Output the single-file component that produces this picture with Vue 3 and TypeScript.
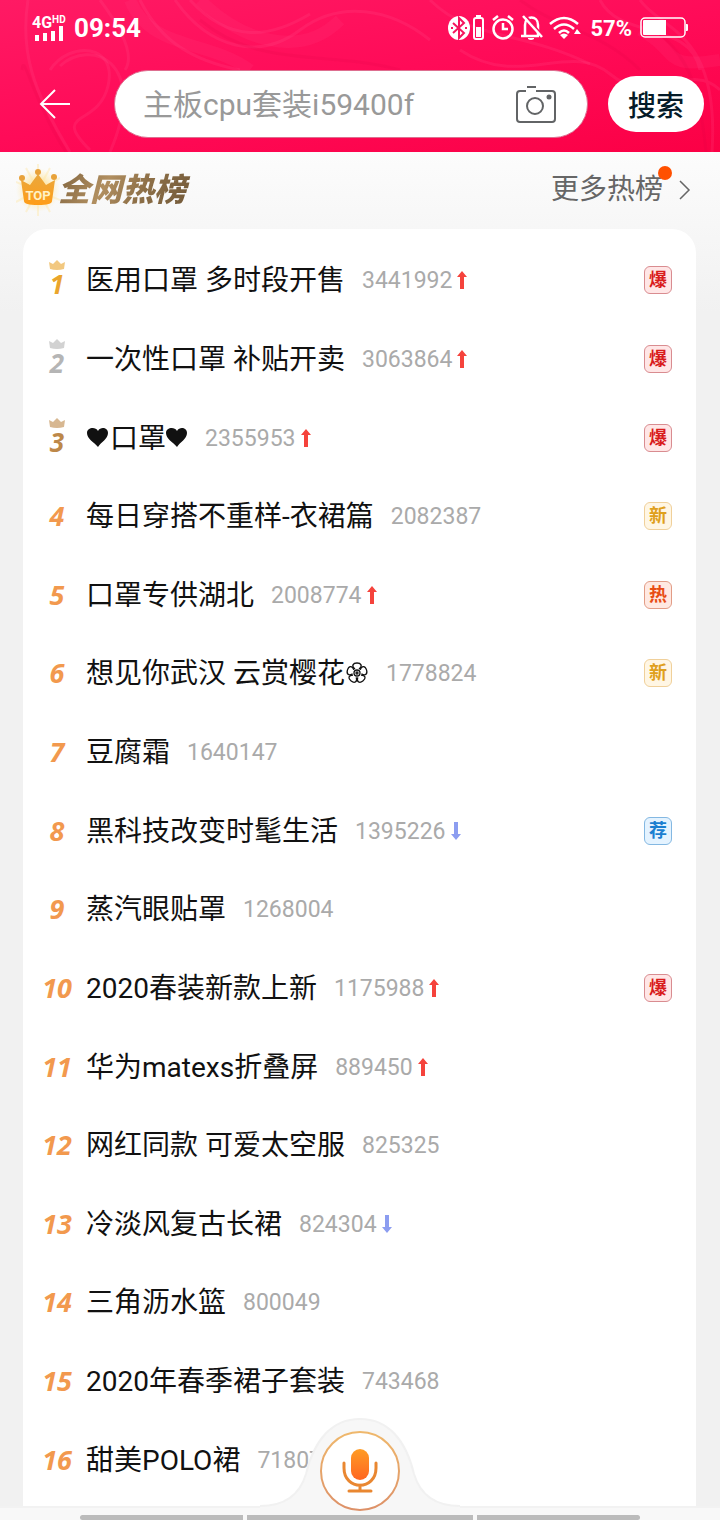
<script setup lang="ts">
import { ref } from 'vue'

type Trend = 'up' | 'down'
type Tag = '爆' | '新' | '热' | '荐'

interface HotItem {
  title: string
  heat: number
  hearts?: boolean
  flower?: boolean
  trend?: Trend
  tag?: Tag
}

const keyword = ref('')

const items: HotItem[] = [
  { title: '医用口罩 多时段开售', heat: 3441992, trend: 'up', tag: '爆' },
  { title: '一次性口罩 补贴开卖', heat: 3063864, trend: 'up', tag: '爆' },
  { title: '口罩', hearts: true, heat: 2355953, trend: 'up', tag: '爆' },
  { title: '每日穿搭不重样-衣裙篇', heat: 2082387, tag: '新' },
  { title: '口罩专供湖北', heat: 2008774, trend: 'up', tag: '热' },
  { title: '想见你武汉 云赏樱花', flower: true, heat: 1778824, tag: '新' },
  { title: '豆腐霜', heat: 1640147 },
  { title: '黑科技改变时髦生活', heat: 1395226, trend: 'down', tag: '荐' },
  { title: '蒸汽眼贴罩', heat: 1268004 },
  { title: '2020春装新款上新', heat: 1175988, trend: 'up', tag: '爆' },
  { title: '华为matexs折叠屏', heat: 889450, trend: 'up' },
  { title: '网红同款 可爱太空服', heat: 825325 },
  { title: '冷淡风复古长裙', heat: 824304, trend: 'down' },
  { title: '三角沥水篮', heat: 800049 },
  { title: '2020年春季裙子套装', heat: 743468 },
  { title: '甜美POLO裙', heat: 718077 },
]

const tagClass: Record<Tag, string> = { 爆: 'boom', 新: 'new', 热: 'hot', 荐: 'pick' }
const heartPath = 'M12 20C8 15 1 12 1 6C1 1 9-1 12 4C15-1 22 1 22 6C22 12 15 15 12 20z'
const petals = [0, 72, 144, 216, 288]
</script>

<template>
  <div class="page">
    <header class="top">
      <svg class="swirl" viewBox="0 0 720 152" preserveAspectRatio="none" aria-hidden="true">
        <g fill="none" stroke="#ff5c93" stroke-opacity=".16" stroke-width="3">
          <path d="M28 0C20 50 32 90 70 152M50 70C70 40 118 44 108 86S50 110 90 150" />
          <path d="M60 66C90 38 150 60 110 152M100 0C130 40 132 60 125 70M140 0C160 40 190 60 240 70" />
          <path d="M175 0C210 50 260 60 300 30S390 8 430 40M190 0C230 44 270 38 310 14M430 0C470 40 520 30 590 64" />
          <path d="M460 50C520 90 570 40 610 74S690 60 720 90M600 0C620 40 690 20 700 70M640 0C660 30 720 30 712 152" />
        </g>
        <g fill="none" stroke="#ff4a85" stroke-opacity=".14" stroke-width="12">
          <path d="M130 0C150 50 210 40 250 70M200 0C240 40 300 60 340 20M640 30C680 50 660 70 720 60" />
        </g>
        <g fill="none" stroke="#d8003f" stroke-opacity=".12" stroke-width="3">
          <path d="M22 70C24 50 32 100 66 152M200 20C260 70 330 50 400 70" />
          <path d="M520 0C560 30 600 30 640 70M660 34C690 60 700 90 706 152" />
        </g>
      </svg>

      <div class="status">
        <div class="status-left">
          <div class="signal">
            <span class="network">4G<sup>HD</sup></span>
            <svg width="36" height="16" viewBox="0 0 36 16" aria-hidden="true">
              <path fill="#fff" d="M3 10h4v6H3zM11 8h4v8h-4zM19 6h4v10h-4zM27 1h4v15h-4z" />
            </svg>
          </div>
          <span class="time">09:54</span>
        </div>
        <div class="status-right">
          <svg width="135" height="28" viewBox="0 0 135 28" aria-hidden="true">
            <ellipse cx="12" cy="14" rx="11" ry="12" fill="#fff" />
            <path d="M6 9l11 10-5 5V4l5 5L6 19" fill="none" stroke="#f5155e" stroke-width="2" />
            <path d="M4 14h2M18 14h2" stroke="#f5155e" stroke-width="2" />
            <g fill="none" stroke="#fff" stroke-width="2">
              <rect x="27" y="4" width="9" height="21" rx="2" />
              <path d="M29 2h5" />
              <circle cx="56" cy="15" r="9.500" stroke-width="2.500" />
              <path d="M56 9v6h5M46 6l5-4M61 2l5 4" stroke-width="2.500" />
              <path d="M78 21V11C78 1 91 1 91 11v10M74 22h18" stroke-width="2.500" />
            </g>
            <path d="M78 1l18 21" stroke="#fb1360" stroke-width="2" />
            <path d="M76 2l19 21" stroke="#fff" stroke-width="2.500" />
            <path fill="#fff" d="M29 13h5v10h-5zM81 24h6v1q-3 2-6 0z" />
            <g fill="none" stroke="#fff" stroke-width="2.500">
              <path d="M103 10Q117-2 131 10M107 15q10-9 20 0M112 19q5-5 10 0" />
            </g>
            <path fill="#fff" d="M113 21q4-3 8 0l-4 4zM130 15l4 5h-7z" />
          </svg>
          <span class="percent">57%</span>
          <svg width="48" height="22" viewBox="0 0 48 22" aria-hidden="true">
            <rect x="1" y="1" width="44" height="19" rx="4" fill="none" stroke="#fff" stroke-width="1.500" />
            <path fill="#fff" d="M4 3h22v15H4q-1 0-1-1V4q0-1 1-1zM46 7h1q1 0 1 1v5q0 1-1 1h-1z" />
          </svg>
        </div>
      </div>

      <form class="search" @submit.prevent>
        <button class="back" type="button" aria-label="返回">
          <svg width="32" height="30" viewBox="0 0 32 30" fill="none" stroke="#fff" stroke-width="2">
            <path d="M32 15H3M17 1L3 15l14 14" />
          </svg>
        </button>
        <div class="field">
          <input v-model="keyword" type="text" aria-label="搜索商品" placeholder="主板cpu套装i59400f" />
          <button class="camera" type="button" aria-label="拍照搜索">
            <svg width="40" height="38" viewBox="0 0 40 38" fill="none" stroke="#626466" stroke-width="2">
              <path d="M10 6H4Q1 6 1 9v25q0 3 3 3h32q3 0 3-3V9q0-3-3-3H20M11 2h9" />
              <circle cx="19" cy="21" r="8" />
              <circle cx="33" cy="12" r="2.500" fill="#626466" stroke="none" />
            </svg>
          </button>
        </div>
        <button class="go" type="submit">搜索</button>
      </form>
    </header>

    <main class="body">
      <div class="heading">
        <h1 class="brand">
          <svg width="44" height="52" viewBox="0 0 44 52" aria-hidden="true">
            <defs>
              <radialGradient id="glow">
                <stop offset=".5" stop-color="#ffe08a" stop-opacity=".6" />
                <stop offset="1" stop-color="#ffe9a8" stop-opacity="0" />
              </radialGradient>
              <linearGradient id="gold" x2="0" y2="1">
                <stop stop-color="#e9a83e" />
                <stop offset="1" stop-color="#ff9d18" />
              </linearGradient>
            </defs>
            <circle cx="22" cy="26" r="22" fill="url(#glow)" />
            <path d="M22 0v52M0 18l44 18M0 38l44-24M10 4l24 44M34 4L10 48" stroke="#ffe7a0" stroke-opacity=".4" stroke-width="2" />
            <path d="M5 16l9 5 8-11 8 11 9-5-3 21q0 4-14 4T8 37z" fill="url(#gold)" />
            <g fill="#e8a23a">
              <circle cx="6" cy="14" r="3" />
              <circle cx="22" cy="8" r="3" />
              <circle cx="38" cy="13" r="3" />
            </g>
            <text x="22" y="36" text-anchor="middle" class="crown-text">TOP</text>
          </svg>
          <span class="brand-text">全网热榜</span>
        </h1>
        <a class="more" href="#">
          <span class="more-text">更多热榜<i class="dot"></i></span>
          <svg width="12" height="20" viewBox="0 0 12 20" fill="none" stroke="#666" stroke-width="1.500">
            <path d="M1 1l9 9-9 9" />
          </svg>
        </a>
      </div>

      <ol class="list">
        <li v-for="(item, i) in items" :key="item.title" class="row">
          <span class="rank" :class="i < 3 ? ['medal', `medal-${i + 1}`] : ''">
            <svg v-if="i < 3" class="crown" width="18" height="10" viewBox="0 0 18 10" aria-hidden="true">
              <path d="M1 2l4 2 4-4 4 4 4-2-1 7q-7 2-14 0z" />
            </svg>
            <span class="digit">{{ i + 1 }}</span>
          </span>
          <a class="title" href="#">
            <svg v-if="item.hearts" width="24" height="22" viewBox="0 0 24 22" role="img" aria-label="爱心">
              <path :d="heartPath" fill="currentColor" />
            </svg>
            <span>{{ item.title }}</span>
            <svg v-if="item.hearts" width="22" height="22" viewBox="1 0 22 22" role="img" aria-label="爱心">
              <path :d="heartPath" fill="currentColor" />
            </svg>
            <svg v-if="item.flower" width="24" height="22" viewBox="-12 -11 24 22" fill="none" stroke="currentColor" stroke-width="1.300" role="img" aria-label="花">
              <path v-for="angle in petals" :key="angle" :transform="`rotate(${angle})`" d="M-2-4C-6-7-4-10 0-10S6-7 2-4" />
              <circle r="3" />
              <circle r="1" />
            </svg>
          </a>
          <span class="heat">{{ item.heat }}</span>
          <svg v-if="item.trend" class="trend" :class="item.trend" width="10" height="20" viewBox="0 0 10 20" role="img" :aria-label="item.trend">
            <path d="M5 1l5 6H7v12H3V7H0z" />
          </svg>
          <span v-if="item.tag" class="tag" :class="tagClass[item.tag]">{{ item.tag }}</span>
        </li>
      </ol>
    </main>

    <footer class="dock">
      <div class="nav"><i class="bar"></i><i class="bar wide"></i><i class="bar"></i></div>
      <div class="voice-wrap">
        <svg class="bump" width="200" height="102" viewBox="0 0 200 102" aria-hidden="true">
          <path d="M0 102V88C26 88 40 76 46 56C54 22 72 1 100 1S146 22 154 56C160 76 174 88 200 88V102z" fill="#f7f7f7" />
          <path d="M0 88C26 88 40 76 46 56C54 22 72 1 100 1S146 22 154 56C160 76 174 88 200 88" fill="none" stroke="#f1f1f1" stroke-width="2" />
        </svg>
        <button class="voice" type="button" aria-label="语音搜索">
          <svg width="80" height="80" viewBox="0 0 80 80" fill="none">
            <defs>
              <linearGradient id="ring" x2="0" y2="1">
                <stop stop-color="#efb86c" />
                <stop offset="1" stop-color="#dd9168" />
              </linearGradient>
              <linearGradient id="mic" x2="0" y2="1">
                <stop stop-color="#ff9c25" />
                <stop offset="1" stop-color="#ff6622" />
              </linearGradient>
            </defs>
            <circle cx="40" cy="40" r="39" fill="#fff" stroke="url(#ring)" stroke-width="2" />
            <rect x="31" y="18" width="18" height="31" rx="9" fill="url(#mic)" />
            <path d="M24 32v5C24 60 56 60 56 37v-5M40 54v6M29 60h22" stroke="#e98731" stroke-width="3" stroke-linecap="round" />
          </svg>
        </button>
      </div>
    </footer>
  </div>
</template>

<style>
body {
  margin: 0;
  background: #f1f1f1;
}
</style>

<style scoped>
.page {
  position: relative;
  display: flex;
  flex-direction: column;
  min-height: 100vh;
  font-family: Roboto, "Noto Sans CJK SC", sans-serif;
  color: #111;
}
button {
  padding: 0;
  border: 0;
  background: none;
  font: inherit;
  cursor: pointer;
}
svg {
  display: block;
  flex: none;
}
a {
  color: inherit;
  text-decoration: none;
}
.top {
  position: relative;
  background: linear-gradient(170deg, #ff1a64, #ff0b58 50%, #fb0045);
  padding: 14px 16px 14px 32px;
}
.swirl {
  position: absolute;
  inset: 0;
  width: 100%;
  height: 100%;
}
.status {
  position: relative;
  display: flex;
  justify-content: space-between;
  align-items: center;
  height: 28px;
  margin-right: 16px;
  color: #fff;
}
.status-left,
.status-right {
  display: flex;
  align-items: center;
}
.status-left {
  gap: 6px;
}
.status-right {
  gap: 8px;
}
.signal {
  display: grid;
  width: 36px;
}
.signal > * {
  grid-area: 1 / 1;
}
.signal svg {
  margin-top: 9px;
}
.network {
  display: flex;
  font-size: 16px;
  line-height: 14px;
  font-weight: 700;
}
.network sup {
  font-size: 10px;
  line-height: 8px;
}
.time {
  font-size: 26px;
  line-height: 32px;
  font-weight: 700;
}
.percent {
  padding-top: 2px;
  font-size: 22px;
  line-height: 28px;
  font-weight: 700;
}
.search {
  position: relative;
  display: flex;
  align-items: center;
  height: 68px;
  margin: 28px 0 0 6px;
}
.back {
  margin-right: 44px;
}
.field {
  flex: 1;
  display: flex;
  align-items: center;
  min-width: 0;
  height: 68px;
  box-sizing: border-box;
  border: 1px solid #dd6f90;
  border-radius: 34px;
  padding: 0 31px 0 28px;
  background: #fff;
}
input {
  flex: 1;
  min-width: 0;
  padding: 2px 0 0;
  border: 0;
  outline: 0;
  background: none;
  font: inherit;
  font-size: 30px;
  line-height: 40px;
}
input::placeholder {
  color: #999;
  opacity: 1;
}
.go {
  flex: none;
  width: 96px;
  height: 56px;
  margin-left: 20px;
  border-radius: 28px;
  background: #fff;
  color: #051b28;
  font-size: 28px;
  font-weight: 500;
}
.body {
  flex: 1;
  display: flex;
  flex-direction: column;
  background: linear-gradient(#fcfcfc, #f1f1f1 160px);
}
.heading {
  display: flex;
  align-items: center;
  justify-content: space-between;
  height: 77px;
  box-sizing: border-box;
  padding: 0 29px 2px 16px;
}
.brand {
  display: flex;
  align-items: center;
  margin: 0;
}
.crown-text {
  font: bold 13px Roboto, sans-serif;
  fill: #fff2c4;
}
.brand-text {
  padding-right: 8px;
  margin-left: -2px;
  font-size: 32px;
  line-height: 44px;
  font-weight: 900;
  font-style: italic;
  color: transparent;
  background: linear-gradient(120deg, #7e623e, #b18f60 35%, #8e7048 60%, #6e5637);
  background-clip: text;
}
.more {
  display: flex;
  align-items: center;
  gap: 16px;
  color: #666;
}
.more-text {
  position: relative;
  font-size: 28px;
  line-height: 40px;
}
.dot {
  position: absolute;
  top: -4px;
  right: -9px;
  width: 14px;
  height: 14px;
  border-radius: 50%;
  background: #ff5000;
}
.list {
  flex: 1;
  display: grid;
  grid-auto-rows: 1fr;
  margin: 0 24px 0 23px;
  padding: 12px 24px 7px 16px;
  list-style: none;
  background: #fff;
  border-radius: 24px 24px 0 0;
}
.row {
  display: flex;
  align-items: center;
  min-height: 64px;
}
.rank {
  display: flex;
  flex-direction: column;
  align-items: center;
  width: 36px;
  margin-right: 11px;
  font: italic 700 27px/32px "Open Sans", "Noto Sans", sans-serif;
  color: #f2994e;
}
.crown {
  fill: currentColor;
  opacity: .6;
}
.medal .digit {
  line-height: 28px;
}
.medal {
  padding-bottom: 2px;
  font-size: 26px;
}
.medal-1 {
  color: #eaa52c;
}
.medal-2 {
  color: #b5b5b5;
}
.medal-3 {
  color: #bd8849;
}
.title {
  display: flex;
  align-items: center;
  padding-top: 2px;
  font-size: 28px;
  line-height: 40px;
  white-space: nowrap;
}
.title svg {
  margin-bottom: 2px;
}
.heat {
  padding-top: 2px;
  margin-left: 17px;
  font-size: 23px;
  line-height: 40px;
  color: #aaa;
}
.trend {
  margin-left: 5px;
}
.up {
  fill: #f5433c;
}
.down {
  fill: #8c9df0;
  transform: rotate(180deg);
}
.tag {
  width: 28px;
  height: 28px;
  margin-left: auto;
  box-sizing: border-box;
  border: 1px solid;
  border-radius: 6px;
  font-size: 18px;
  line-height: 26px;
  font-weight: 700;
  text-align: center;
}
.boom {
  color: #d91c1c;
  border-color: #d98c90;
  background: #ffe6e6;
}
.new {
  color: #dfa01c;
  border-color: #f0d09a;
  background: #fff6e4;
}
.hot {
  color: #e84d14;
  border-color: #e29c86;
  background: #ffe9e2;
}
.pick {
  color: #1b7fd0;
  border-color: #84b8e2;
  background: #e4f3ff;
}
.dock {
  position: sticky;
  bottom: 0;
}
.nav {
  display: flex;
  justify-content: center;
  align-items: flex-end;
  gap: 4px;
  height: 14px;
  box-sizing: border-box;
  border-top: 2px solid #f2f2f2;
  padding: 0 80px;
  background: #f8f8f8;
}
.bar {
  position: relative;
  z-index: 1;
  flex: 163;
  height: 5px;
  background: #bbb;
}
.bar.wide {
  flex: 226;
}
.bar:first-child {
  border-radius: 3px 0 0 3px;
}
.bar:last-child {
  border-radius: 0 3px 3px 0;
}
.voice-wrap {
  position: absolute;
  left: 50%;
  bottom: 0;
  width: 200px;
  height: 102px;
  margin-left: -100px;
}
.voice {
  position: absolute;
  top: 13px;
  left: 60px;
}
</style>
